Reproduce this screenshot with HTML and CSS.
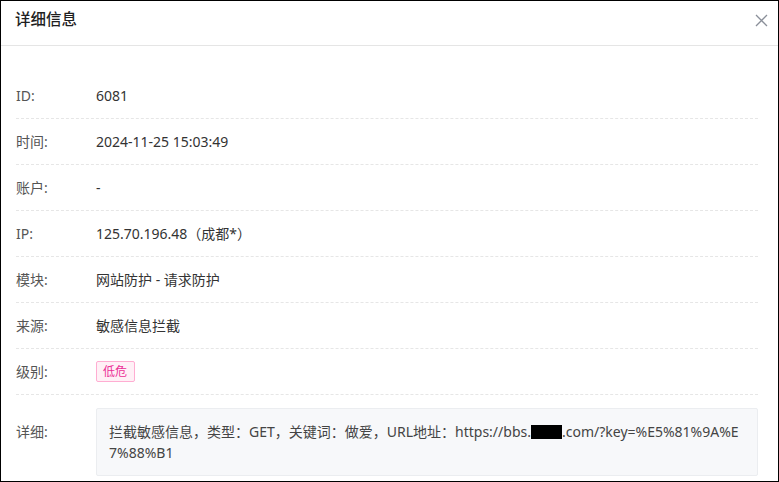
FILE: index.html
```html
<!DOCTYPE html>
<html lang="zh-CN">
<head>
<meta charset="utf-8">
<title>详细信息</title>
<link rel="stylesheet" href="styles.css">
</head>
<body>
<div class="dialog">
  <div class="header">
    <div class="title">详细信息</div>
    <button class="close" aria-label="关闭">
      <svg width="13" height="13" viewBox="0 0 13 13"><path d="M1 1 L12 12 M12 1 L1 12" stroke="#8a8f99" stroke-width="1.3" fill="none"/></svg>
    </button>
  </div>
  <div class="body">
    <div class="row"><div class="label">ID:</div><div class="value">6081</div></div>
    <div class="row"><div class="label">时间:</div><div class="value">2024-11-25 15:03:49</div></div>
    <div class="row"><div class="label">账户:</div><div class="value">-</div></div>
    <div class="row"><div class="label">IP:</div><div class="value">125.70.196.48（成都*）</div></div>
    <div class="row"><div class="label">模块:</div><div class="value">网站防护 - 请求防护</div></div>
    <div class="row"><div class="label">来源:</div><div class="value">敏感信息拦截</div></div>
    <div class="row"><div class="label">级别:</div><div class="value"><span class="tag">低危</span></div></div>
    <div class="row last"><div class="label">详细:</div><div class="detail">拦截敏感信息，类型：GET，关键词：做爱，URL地址：https://bbs.<span class="redact"></span>.com/?key=%E5%81%9A%E7%88%B1</div></div>
  </div>
</div>
</body>
</html>
```
FILE: styles.css
```css
* { box-sizing: border-box; }
html, body { margin: 0; padding: 0; }
body {
  width: 779px;
  height: 482px;
  font-family: "Noto Sans", "Noto Sans CJK SC", sans-serif;
  font-size: 14px;
  color: #333;
  background: #fff;
}
.dialog {
  width: 779px;
  height: 482px;
  border: 1px solid #000;
  overflow: hidden;
  background: #fff;
}
.header {
  height: 45px;
  border-bottom: 1px solid #e5e5e5;
  display: flex;
  align-items: flex-start;
  justify-content: space-between;
  padding: 7px 10px 0 14px;
}
.title {
  font-size: 15.5px;
  line-height: 22px;
  font-weight: 500;
  color: #1f1f1f;
}
.close {
  border: 0;
  background: none;
  padding: 0;
  margin-top: 6px;
  width: 13px;
  height: 13px;
  display: flex;
}
.body {
  padding: 27px 20px 0 15px;
}
.row {
  display: flex;
  align-items: center;
  height: 46px;
  line-height: 20px;
  border-bottom: 1px dashed #e6e6e6;
}
.label {
  width: 80px;
  color: #555;
  flex-shrink: 0;
}
.value { color: #333; }
.row.last {
  border-bottom: 0;
  height: auto;
  align-items: flex-start;
  padding-top: 13px;
}
.row.last .label {
  padding-top: 13px;
  line-height: 21px;
}
.detail {
  flex: 1;
  background: #f7f8fa;
  border: 1px solid #ebedf0;
  border-radius: 2px;
  padding: 12px 12px;
  line-height: 21px;
  color: #444;
  word-break: break-all;
}
.redact {
  display: inline-block;
  width: 31px;
  height: 14px;
  background: #000;
  vertical-align: -2px;
}
.tag {
  display: inline-block;
  height: 21px;
  line-height: 19px;
  padding: 0 7px 0 6px;
  font-size: 12px;
  color: #eb2f96;
  background: #fff0f6;
  border: 1px solid #ffadd2;
  border-radius: 2px;
}
```
